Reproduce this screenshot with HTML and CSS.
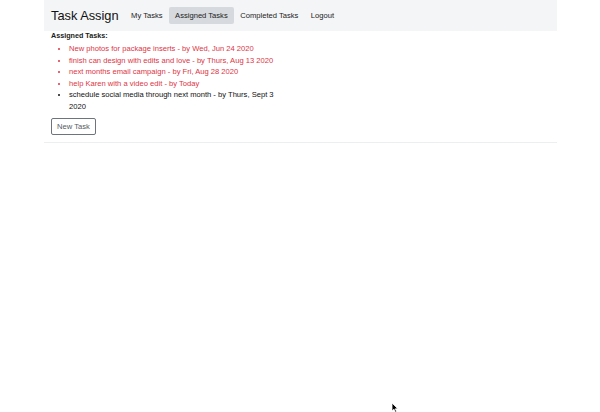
FILE: index.html
```html
<!DOCTYPE html>
<html>
<head>
<meta charset="utf-8">
<link rel="stylesheet" href="styles.css">
</head>
<body>
<div class="page">
  <nav class="navbar">
    <span class="brand">Task Assign</span>
    <a class="nav-link">My Tasks</a>
    <a class="nav-link active">Assigned Tasks</a>
    <a class="nav-link">Completed Tasks</a>
    <a class="nav-link">Logout</a>
  </nav>
  <main class="content">
    <div class="col">
      <div class="label">Assigned Tasks:</div>
      <ul class="tasks">
        <li class="late">New photos for package inserts - by Wed, Jun 24 2020</li>
        <li class="late">finish can design with edits and love - by Thurs, Aug 13 2020</li>
        <li class="late">next months email campaign - by Fri, Aug 28 2020</li>
        <li class="late">help Karen with a video edit - by Today</li>
        <li>schedule social media through next month - by Thurs, Sept 3 2020</li>
      </ul>
      <button class="btn">New Task</button>
    </div>
  </main>
</div>
<svg class="cursor" width="8" height="12" viewBox="0 0 8 12"><path d="M1 1 L1 9 L3 7.2 L4.6 10.6 L5.8 10 L4.3 6.8 L6.8 6.8 Z" fill="#000" stroke="#fff" stroke-width="0.8"/></svg>
</body>
</html>
```
FILE: styles.css
```css
html, body {
  margin: 0;
  background: #ffffff;
}
body {
  font-family: "Liberation Sans", Arial, sans-serif;
  color: #212529;
  width: 600px;
  height: 412px;
  position: relative;
  overflow: hidden;
}
.page {
  width: 513px;
  margin-left: 44px;
}
.navbar {
  display: flex;
  align-items: center;
  height: 31px;
  background: #f4f5f7;
  padding: 0 7px;
}
.brand {
  font-size: 12.8px;
  margin-right: 6px;
  color: #111;
}
.nav-link {
  font-size: 7.6px;
  line-height: 17px;
  padding: 0 6px 0 6.5px;
  border-radius: 2px;
  color: #1c1c1c;
}
.nav-link.active {
  background: #d6d9dd;
}
.content {
  border-bottom: 1px solid #eceef0;
  padding: 0 7px 7.5px;
}
.col {
  width: 236px;
}
.label {
  font-size: 7.2px;
  font-weight: bold;
  line-height: 10px;
  margin-bottom: 2px;
  color: #1a1d20;
}
.tasks {
  margin: 0 0 5.5px;
  padding-left: 18px;
  font-size: 7.6px;
  line-height: 11.5px;
  color: #111;
}
.tasks li.late {
  color: #dc3545;
}
.btn {
  font-family: inherit;
  font-size: 7.6px;
  color: #555b61;
  background: #fff;
  border: 1px solid #6c757d;
  border-radius: 2px;
  height: 17px;
  padding: 0 5px;
  display: block;
}
.cursor {
  position: absolute;
  left: 391px;
  top: 402px;
}
```
